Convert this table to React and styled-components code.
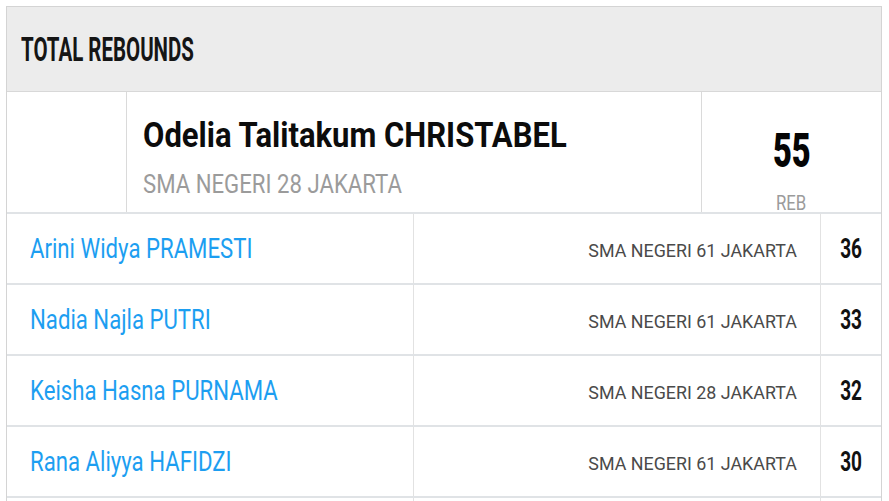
import styled, { createGlobalStyle } from "styled-components";

const GlobalStyle = createGlobalStyle`
  body {
    margin: 0;
    background: #ffffff;
    font-family: "Roboto", "Liberation Sans", sans-serif;
  }
`;

const players = [
  { name: "Arini Widya PRAMESTI", school: "SMA NEGERI 61 JAKARTA", reb: 36 },
  { name: "Nadia Najla PUTRI", school: "SMA NEGERI 61 JAKARTA", reb: 33 },
  { name: "Keisha Hasna PURNAMA", school: "SMA NEGERI 28 JAKARTA", reb: 32 },
  { name: "Rana Aliyya HAFIDZI", school: "SMA NEGERI 61 JAKARTA", reb: 30 },
  { name: "Salsabila ANINDYA", school: "SMA NEGERI 28 JAKARTA", reb: 29 },
];

const Page = styled.div`
  padding: 6px 0 0 6px;
  width: 889px;
  height: 501px;
  box-sizing: border-box;
  overflow: hidden;
`;

const Card = styled.section`
  width: 876px;
  border: 1px solid #d4d4d4;
  border-bottom: none;
  box-sizing: border-box;
`;

const Header = styled.header`
  height: 85px;
  background: #ececec;
  border-bottom: 1px solid #d8d8d8;
  box-sizing: border-box;
  display: flex;
  align-items: center;
  padding-left: 14px;
`;

// condensed look: scale plain Roboto horizontally
const Squeeze = styled.span`
  display: inline-block;
  white-space: nowrap;
  transform: scaleX(${({ $x }) => $x || 0.84});
  transform-origin: ${({ $origin }) => $origin || "left"} center;
`;

const Title = styled.h2`
  margin: 0;
  font-size: 33px;
  font-weight: 700;
  line-height: 1;
  color: #151515;
  text-transform: uppercase;
`;

const Featured = styled.div`
  display: grid;
  grid-template-columns: 120px 1fr 179px;
  height: 120px;
`;

const Blank = styled.div`
  border-right: 1px solid #dadada;
`;

const Leader = styled.div`
  display: flex;
  flex-direction: column;
  padding: 23px 0 0 16px;
  border-right: 1px solid #dadada;
  overflow: hidden;
`;

const LeaderName = styled.div`
  font-size: 35px;
  font-weight: 700;
  line-height: 42px;
  color: #0c0c0c;
`;

const LeaderSchool = styled.div`
  margin-top: 12px;
  font-size: 26px;
  line-height: 30px;
  color: #9b9b9b;
`;

const Stat = styled.div`
  display: flex;
  flex-direction: column;
  align-items: center;
  padding-top: 35px;
  overflow: hidden;
`;

const StatValue = styled.div`
  font-size: 48px;
  font-weight: 900;
  line-height: 48px;
  color: #050505;
`;

const StatLabel = styled.div`
  margin-top: 16px;
  font-size: 20px;
  line-height: 24px;
  color: #9b9b9b;
`;

const Row = styled.div`
  display: grid;
  grid-template-columns: 407px 407px 1fr;
  height: 71px;
  border-top: 2px solid #e0e3e6;
  box-sizing: border-box;
`;

const NameCell = styled.div`
  display: flex;
  align-items: center;
  padding-left: 23px;
  border-right: 1px solid #e2e2e2;
  font-size: 28px;
  color: #1c9ef1;
  overflow: hidden;
`;

const SchoolCell = styled.div`
  display: flex;
  align-items: center;
  justify-content: flex-end;
  padding: 4px 23px 0 0;
  border-right: 1px solid #e2e2e2;
  font-size: 19px;
  color: #4a4a4a;
  overflow: hidden;
`;

const RebCell = styled.div`
  display: flex;
  align-items: center;
  justify-content: center;
  font-size: 28px;
  font-weight: 700;
  color: #111111;
`;

export default function App() {
  return (
    <Page>
      <GlobalStyle />
      <Card>
        <Header>
          <Title>
            <Squeeze $x={0.62}>Total Rebounds</Squeeze>
          </Title>
        </Header>
        <Featured>
          <Blank />
          <Leader>
            <LeaderName>
              <Squeeze $x={0.886}>Odelia Talitakum CHRISTABEL</Squeeze>
            </LeaderName>
            <LeaderSchool>
              <Squeeze $x={0.853}>SMA NEGERI 28 JAKARTA</Squeeze>
            </LeaderSchool>
          </Leader>
          <Stat>
            <StatValue>
              <Squeeze $x={0.68} $origin="center">55</Squeeze>
            </StatValue>
            <StatLabel>
              <Squeeze $x={0.84} $origin="center">REB</Squeeze>
            </StatLabel>
          </Stat>
        </Featured>
        {players.map((p) => (
          <Row key={p.name}>
            <NameCell>
              <Squeeze $x={0.792}>{p.name}</Squeeze>
            </NameCell>
            <SchoolCell>
              <Squeeze $x={0.94} $origin="right">{p.school}</Squeeze>
            </SchoolCell>
            <RebCell>
              <Squeeze $x={0.68} $origin="center">{p.reb}</Squeeze>
            </RebCell>
          </Row>
        ))}
      </Card>
    </Page>
  );
}
